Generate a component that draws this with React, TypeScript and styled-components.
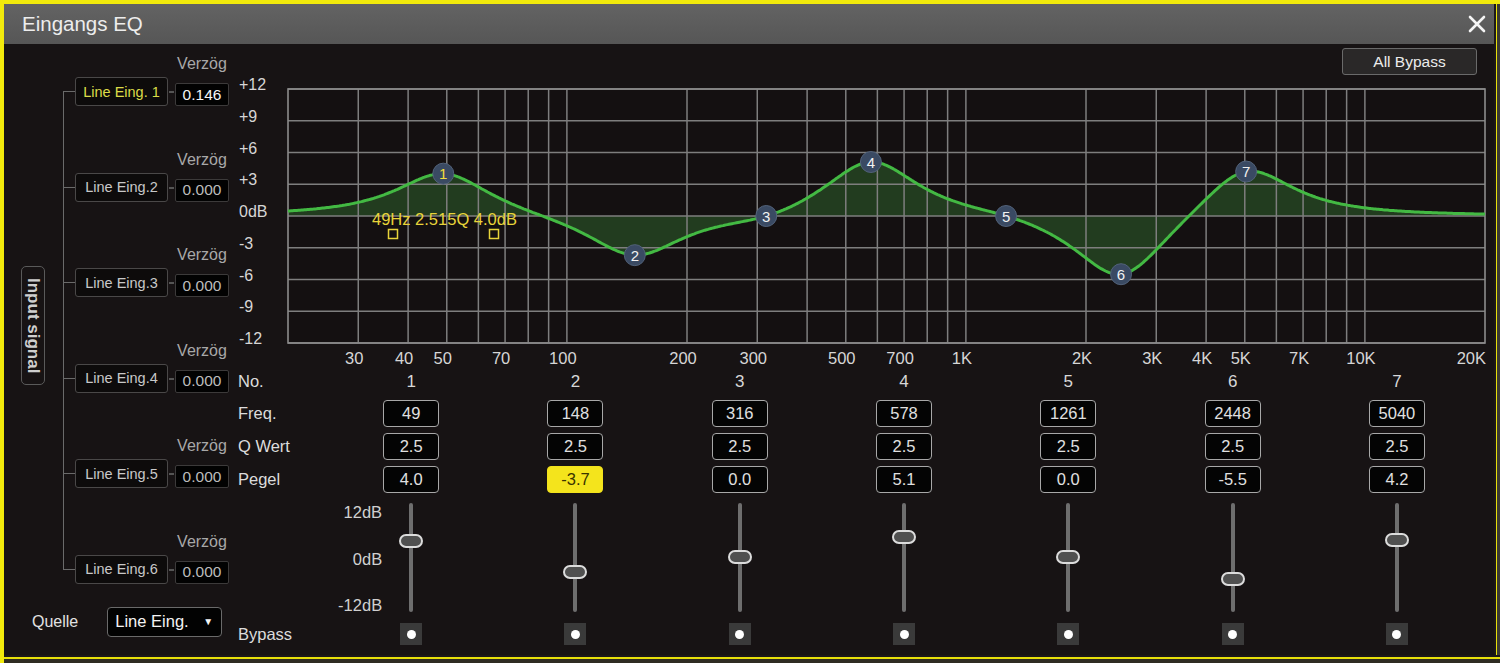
import React from "react";
import styled, { createGlobalStyle } from "styled-components";

interface Band {
  no: number;
  freq: number;
  q: string;
  gain: number;
}

const bands: Band[] = [
  { no: 1, freq: 49, q: "2.5", gain: 4.0 },
  { no: 2, freq: 148, q: "2.5", gain: -3.7 },
  { no: 3, freq: 316, q: "2.5", gain: 0.0 },
  { no: 4, freq: 578, q: "2.5", gain: 5.1 },
  { no: 5, freq: 1261, q: "2.5", gain: 0.0 },
  { no: 6, freq: 2448, q: "2.5", gain: -5.5 },
  { no: 7, freq: 5040, q: "2.5", gain: 4.2 },
];

const inputs = [
  { name: "Line Eing. 1", delay: "0.146", active: true },
  { name: "Line Eing.2", delay: "0.000", active: false },
  { name: "Line Eing.3", delay: "0.000", active: false },
  { name: "Line Eing.4", delay: "0.000", active: false },
  { name: "Line Eing.5", delay: "0.000", active: false },
  { name: "Line Eing.6", delay: "0.000", active: false },
];

const GlobalStyle = createGlobalStyle`
  * {
    box-sizing: border-box;
  }

  html, body {
    margin: 0;
    padding: 0;
  }

  body {
    width: 1500px;
    height: 663px;
    overflow: hidden;
    background: #f2ea0c;
    font-family: "Liberation Sans", Arial, sans-serif;
  }
`;

// chart geometry (svg coords, origin at page x 236 / y 76)
const W = 1258;
const H = 290;
const X0 = 52;
const X1 = 1249;
const Y0 = 13;
const Y1 = 267;
const DEC = (X1 - X0) / 3;
const ZERO = (Y0 + Y1) / 2;
const PX_DB = (Y1 - Y0) / 24;

const fx = (f: number) => X0 + DEC * Math.log10(f / 20);
const gy = (db: number) => ZERO - db * PX_DB;

const bell = (f: number, f0: number) => {
  const o = Math.log2(f / f0) / 0.5;
  return 1 / (1 + o * o);
};

// weights chosen so the drawn curve runs through every node
const weights = (() => {
  const n = bands.length;
  const m = bands.map((bi) => [...bands.map((bj) => bell(bi.freq, bj.freq)), bi.gain]);
  for (let c = 0; c < n; c++) {
    for (let r = 0; r < n; r++) {
      if (r === c) continue;
      const k = m[r][c] / m[c][c];
      for (let j = c; j <= n; j++) m[r][j] -= k * m[c][j];
    }
  }
  return m.map((row, i) => row[n] / row[i]);
})();

const response = (f: number) =>
  bands.reduce((sum, b, i) => sum + weights[i] * bell(f, b.freq), 0);

const gridFreqs: number[] = [];
[10, 100, 1000].forEach((d) => {
  for (let i = d === 10 ? 3 : 1; i < 10; i++) gridFreqs.push(i * d);
});
gridFreqs.push(10000);

const freqLabels: [number, string][] = [
  [30, "30"],
  [40, "40"],
  [50, "50"],
  [70, "70"],
  [100, "100"],
  [200, "200"],
  [300, "300"],
  [500, "500"],
  [700, "700"],
  [1000, "1K"],
  [2000, "2K"],
  [3000, "3K"],
  [4000, "4K"],
  [5000, "5K"],
  [7000, "7K"],
  [10000, "10K"],
];

const dbLabels = ["+12", "+9", "+6", "+3", "0dB", "-3", "-6", "-9", "-12"];

function EqChart() {
  const pts: string[] = [];
  for (let x = X0; x <= X1; x += 1.5) {
    const f = 20 * Math.pow(10, (x - X0) / DEC);
    pts.push(`${x.toFixed(1)},${gy(response(f)).toFixed(1)}`);
  }
  const line = "M" + pts.join(" L");
  const area = `${line} L${X1},${ZERO} L${X0},${ZERO} Z`;

  return (
    <ChartSvg width={W} height={H} viewBox={`0 0 ${W} ${H}`}>
      <rect x={X0} y={Y0} width={X1 - X0} height={Y1 - Y0} fill="#141011" />
      <path d={area} fill="#2b5a2a" fillOpacity={0.6} />
      {dbLabels.map((l, i) => {
        const y = Y0 + i * 3 * PX_DB;
        return (
          <g key={l}>
            <line x1={X0} x2={X1} y1={y} y2={y} stroke="#7e7e7e" strokeWidth={1.5} />
            <text x={3} y={y + 1} fill="#d6d6d6" fontSize={16}>
              {l}
            </text>
          </g>
        );
      })}
      {gridFreqs.map((f) => (
        <line key={f} x1={fx(f)} x2={fx(f)} y1={Y0} y2={Y1} stroke="#7e7e7e" strokeWidth={1.5} />
      ))}
      <rect x={X0} y={Y0} width={X1 - X0} height={Y1 - Y0} fill="none" stroke="#8c8c8c" strokeWidth={1.6} />
      {freqLabels.map(([f, l]) => (
        <text key={l} x={fx(f) - 4} y={288} fill="#d6d6d6" fontSize={16.5} textAnchor="middle">
          {l}
        </text>
      ))}
      <text x={X1 + 1} y={288} fill="#d6d6d6" fontSize={16.5} textAnchor="end">
        20K
      </text>
      <path d={line} fill="none" stroke="#43b943" strokeWidth={3} strokeLinejoin="round" />
      <text x={136} y={149} fill="#e8d43a" fontSize={16.5}>
        49Hz 2.515Q 4.0dB
      </text>
      <rect x={152.5} y={153.5} width={9} height={9} fill="none" stroke="#e8d43a" strokeWidth={1.5} />
      <rect x={253.5} y={153.5} width={9} height={9} fill="none" stroke="#e8d43a" strokeWidth={1.5} />
      {bands.map((b) => (
        <g key={b.no}>
          <circle cx={fx(b.freq)} cy={gy(b.gain)} r={10.5} fill="#3a4a63" stroke="#52627a" strokeWidth={1} />
          <text
            x={fx(b.freq)}
            y={gy(b.gain) + 5.5}
            fill={b.no === 1 ? "#f0de3c" : "#f2f2f2"}
            fontSize={15}
            textAnchor="middle"
          >
            {b.no}
          </text>
        </g>
      ))}
    </ChartSvg>
  );
}

function App() {
  return (
    <>
      <GlobalStyle />
      <Page>
        <TopRow>
          <Window>
            <TitleBar>
              <Title>Eingangs EQ</Title>
              <svg width="18" height="18" viewBox="0 0 18 18">
                <path d="M2 2 L16 16 M16 2 L2 16" stroke="#f4f4f4" strokeWidth="2.6" strokeLinecap="round" />
              </svg>
            </TitleBar>
            <Body>
              <LeftPanel>
                <TreeArea>
                  <SideCol>
                    <SideLabel>Input signal</SideLabel>
                  </SideCol>
                  <Tree>
                    {inputs.map((inp) => (
                      <Entry key={inp.name}>
                        <DelayLabel>Verzög</DelayLabel>
                        <Tick />
                        <InputBox $active={inp.active}>{inp.name}</InputBox>
                        <Connector />
                        <DelayBox $active={inp.active}>{inp.delay}</DelayBox>
                      </Entry>
                    ))}
                  </Tree>
                </TreeArea>
                <SourceRow>
                  <SourceLabel>Quelle</SourceLabel>
                  <Select>
                    Line Eing.
                    <Caret>▼</Caret>
                  </Select>
                </SourceRow>
              </LeftPanel>
              <MainArea>
                <TopBar>
                  <BypassAll>All Bypass</BypassAll>
                </TopBar>
                <EqChart />
                <Table>
                  <RowLabel>No.</RowLabel>
                  {bands.map((b) => (
                    <NumberCell key={b.no}>{b.no}</NumberCell>
                  ))}
                  <RowLabel>Freq.</RowLabel>
                  {bands.map((b) => (
                    <Cell key={b.no}>
                      <ValueBox>{b.freq}</ValueBox>
                    </Cell>
                  ))}
                  <RowLabel>Q Wert</RowLabel>
                  {bands.map((b) => (
                    <Cell key={b.no}>
                      <ValueBox>{b.q}</ValueBox>
                    </Cell>
                  ))}
                  <RowLabel>Pegel</RowLabel>
                  {bands.map((b) => (
                    <Cell key={b.no}>
                      <ValueBox $highlight={b.no === 2}>{b.gain.toFixed(1)}</ValueBox>
                    </Cell>
                  ))}
                  <div />
                  {bands.map((b) => (
                    <SliderCell key={b.no}>
                      <ScaleSlot>
                        {b.no === 1 && (
                          <Scale>
                            <span>12dB</span>
                            <span>0dB</span>
                            <span>-12dB</span>
                          </Scale>
                        )}
                      </ScaleSlot>
                      <SliderSlot>
                        <Track>
                          <Thumb style={{ top: 54 - b.gain * 4 - 7 }} />
                        </Track>
                      </SliderSlot>
                      <div />
                    </SliderCell>
                  ))}
                  <RowLabel>Bypass</RowLabel>
                  {bands.map((b) => (
                    <Cell key={b.no}>
                      <BypassButton />
                    </Cell>
                  ))}
                </Table>
              </MainArea>
            </Body>
          </Window>
          <RightEdge />
        </TopRow>
        <BottomEdge />
      </Page>
    </>
  );
}

export default App;

const Page = styled.div`
  display: flex;
  flex-direction: column;
  width: 1500px;
  height: 663px;
  border-top: 4px solid #f2ea0c;
  border-left: 4px solid #f2ea0c;
  background: #24221c;
`;

const TopRow = styled.div`
  display: flex;
`;

const Window = styled.div`
  display: flex;
  flex-direction: column;
  width: 1490px;
  height: 651px;
  background: #171314;
`;

const RightEdge = styled.div`
  width: 6px;
  background: linear-gradient(to right, #1b1818 0 2px, #e8e00a 2px 3px, #3b3a33 3px);
`;

const BottomEdge = styled.div`
  flex: 1;
  background: linear-gradient(to bottom, #1b1818 0 2px, #e8e00a 2px 4px, #2e2c22 4px);
`;

const TitleBar = styled.div`
  display: flex;
  align-items: center;
  justify-content: space-between;
  height: 40px;
  padding: 0 8px 0 18px;
  background: linear-gradient(#636363, #565656);
`;

const Title = styled.span`
  font-size: 20.5px;
  color: #ededed;
`;

const Body = styled.div`
  display: flex;
  flex: 1;
`;

const LeftPanel = styled.div`
  display: flex;
  flex-direction: column;
  width: 232px;
`;

const TreeArea = styled.div`
  display: flex;
`;

const SideCol = styled.div`
  display: flex;
  justify-content: center;
  width: 59px;
  padding-top: 222px;
  padding-right: 2px;
`;

const SideLabel = styled.div`
  display: flex;
  align-items: center;
  justify-content: center;
  width: 24px;
  height: 119px;
  border: 1px solid #5a5a5a;
  border-radius: 5px;
  writing-mode: vertical-rl;
  font-size: 17px;
  font-weight: 700;
  color: #cfcfcf;
`;

const Tree = styled.div`
  position: relative;
  display: flex;
  flex-direction: column;
  gap: 43.6px;
  padding-top: 10px;

  &::before {
    content: "";
    position: absolute;
    left: 0;
    top: 48px;
    bottom: 14px;
    width: 1px;
    background: #6a6a6a;
  }
`;

const Entry = styled.div`
  display: grid;
  grid-template-columns: 12px 93px 7px 54px;
  grid-template-rows: 20px 29px;
  row-gap: 3px;
`;

const DelayLabel = styled.div`
  grid-column: 4;
  grid-row: 1;
  font-size: 16px;
  line-height: 20px;
  text-align: center;
  color: #a8a8a8;
`;

const Tick = styled.div`
  grid-column: 1;
  grid-row: 2;
  align-self: center;
  height: 1px;
  background: #6a6a6a;
`;

const InputBox = styled.div<{ $active: boolean }>`
  grid-column: 2;
  grid-row: 2;
  display: flex;
  align-items: center;
  justify-content: center;
  border: 1px solid #4a4848;
  border-radius: 3px;
  background: #0d0b0b;
  font-size: 14.5px;
  color: ${(p) => (p.$active ? "#dcdc48" : "#c8c8c8")};
`;

const Connector = styled.div`
  grid-column: 3;
  grid-row: 2;
  align-self: end;
  margin: 0 1px 13px;
  height: 2px;
  background: #555;
`;

const DelayBox = styled.div<{ $active: boolean }>`
  grid-column: 4;
  grid-row: 2;
  align-self: end;
  display: flex;
  align-items: center;
  justify-content: center;
  height: 23px;
  border: 1px solid #3c3a3a;
  border-radius: 2px;
  background: #020202;
  font-size: 15.5px;
  color: ${(p) => (p.$active ? "#f6f6f6" : "#bcbcbc")};
`;

const SourceRow = styled.div`
  display: flex;
  align-items: center;
  gap: 29px;
  margin-top: 23px;
  padding-left: 28px;
`;

const SourceLabel = styled.span`
  font-size: 16px;
  color: #e2e2e2;
`;

const Select = styled.div`
  display: flex;
  align-items: center;
  justify-content: space-between;
  width: 115px;
  height: 30px;
  padding: 0 8px 0 7px;
  border: 1px solid #6a6a6a;
  border-radius: 4px;
  background: #020202;
  font-size: 16.5px;
  color: #f4f4f4;
`;

const Caret = styled.span`
  font-size: 10px;
`;

const MainArea = styled.div`
  display: flex;
  flex-direction: column;
  flex: 1;
`;

const TopBar = styled.div`
  display: flex;
  justify-content: flex-end;
  align-items: flex-start;
  height: 32px;
  padding: 4px 17px 0 0;
`;

const BypassAll = styled.div`
  display: flex;
  align-items: center;
  justify-content: center;
  width: 135px;
  height: 27px;
  border: 1px solid #6a6a6a;
  border-radius: 3px;
  background: #2a2828;
  font-size: 15.5px;
  color: #ececec;
`;

const ChartSvg = styled.svg`
  display: block;
  font-family: "Liberation Sans", Arial, sans-serif;
`;

const Table = styled.div`
  display: grid;
  grid-template-columns: 93px repeat(7, 164.3px);
  grid-template-rows: 31px 33px 33px 33px 120px 36px;
`;

const RowLabel = styled.div`
  display: flex;
  align-items: center;
  padding-left: 2px;
  font-size: 16.5px;
  color: #dcdcdc;
`;

const Cell = styled.div`
  display: flex;
  align-items: center;
  justify-content: center;
`;

const NumberCell = styled(Cell)`
  font-size: 17px;
  color: #d8d8d8;
`;

const ValueBox = styled.div<{ $highlight?: boolean }>`
  display: flex;
  align-items: center;
  justify-content: center;
  width: 56px;
  height: 27px;
  border: 1.5px solid ${(p) => (p.$highlight ? "#f2e21c" : "#a8a8a8")};
  border-radius: 4px;
  background: ${(p) => (p.$highlight ? "#f4e41c" : "#040404")};
  font-size: 16.5px;
  color: ${(p) => (p.$highlight ? "#3a3400" : "#e0e0e0")};
`;

const SliderCell = styled.div`
  display: grid;
  grid-template-columns: 1fr 24px 1fr;
`;

const ScaleSlot = styled.div`
  display: flex;
  justify-content: flex-end;
  padding: 7px 17px 0 0;
`;

const Scale = styled.div`
  display: flex;
  flex-direction: column;
  justify-content: space-between;
  align-items: flex-end;
  height: 111px;
  font-size: 16.5px;
  line-height: 18px;
  color: #d0d0d0;
`;

const SliderSlot = styled.div`
  display: flex;
  justify-content: center;
  padding-top: 7px;
`;

const Track = styled.div`
  position: relative;
  width: 4px;
  height: 109px;
  background: #6e6e6e;
  border-radius: 2px;
`;

const Thumb = styled.div`
  position: absolute;
  left: 50%;
  width: 24px;
  height: 14px;
  transform: translateX(-50%);
  border: 2px solid #dcdcdc;
  border-radius: 7px;
  background: #505050;
`;

const BypassButton = styled.div`
  display: flex;
  align-items: center;
  justify-content: center;
  width: 22px;
  height: 22px;
  background: #3a3a3a;

  &::after {
    content: "";
    width: 9px;
    height: 9px;
    border-radius: 50%;
    background: #ffffff;
  }
`;
